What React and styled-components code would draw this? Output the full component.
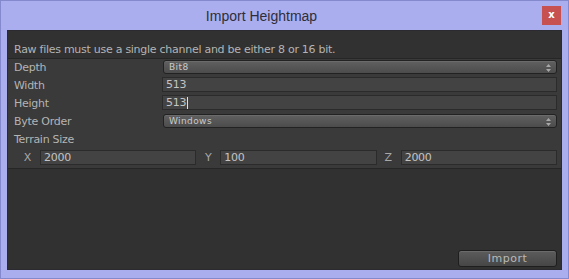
import React from 'react'
import styled, { createGlobalStyle } from 'styled-components'

const GlobalStyle = createGlobalStyle`
    html, body {
        margin: 0;
        padding: 0;
        background: #aaaeee;
    }
    * {
        box-sizing: border-box;
    }
`

const Window = styled.div`
    width: 569px;
    height: 279px;
    background: #aaaeee;
    border: 1px solid #8488cc;
    display: flex;
    flex-direction: column;
`

const TitleBar = styled.div`
    height: 29px;
    display: flex;
    align-items: flex-start;
`

const Title = styled.div`
    flex: 1;
    text-align: center;
    padding-right: 20px;
    padding-top: 6px;
    font-family: "Liberation Sans", Arial, sans-serif;
    font-size: 14px;
    line-height: 18px;
    color: #2e2e3a;
`

const CloseButton = styled.div`
    width: 19px;
    height: 19px;
    margin-top: 5px;
    margin-right: 7px;
    background: #c75050;
    color: #fff;
    font-family: "DejaVu Sans", sans-serif;
    font-weight: bold;
    font-size: 10px;
    line-height: 18px;
    text-align: center;
`

const Content = styled.div`
    flex: 1;
    margin: 0 6px 8px 6px;
    background: #313131;
    border: 1px solid #2a2a30;
    display: flex;
    flex-direction: column;
    font-family: "DejaVu Sans", sans-serif;
    font-size: 11px;
    letter-spacing: -0.27px;
    color: #b4b4b4;
`

const Message = styled.div`
    height: 27px;
    padding: 12px 0 0 6px;
    line-height: 14px;
`

const Panel = styled.div`
    background: #3a3a3a;
    border-top: 1px solid #262626;
    border-bottom: 1px solid #262626;
    padding: 0 4px 1px 6px;
`

const Row = styled.div`
    height: 18px;
    display: grid;
    grid-template-columns: 148px 1fr;
    align-items: start;
`

const Label = styled.div`
    padding-top: 1px;
    line-height: 16px;
`

const Popup = styled.div`
    position: relative;
    margin-top: 1px;
    margin-left: 1px;
    height: 14px;
    border: 1px solid #222;
    border-radius: 3px;
    background: linear-gradient(#606060, #4c4c4c);
    box-shadow: inset 0 1px 0 rgba(255, 255, 255, 0.08);
    padding-left: 5px;
    font-size: 9px;
    letter-spacing: 0.4px;
    line-height: 12px;
    color: #cacaca;
`

const Arrows = styled.svg`
    position: absolute;
    right: 5px;
    top: 3px;
`

const Field = styled.div`
    height: 15px;
    background: #434343;
    border: 1px solid #2b2b2b;
    padding-left: 3px;
    line-height: 13px;
    color: #c4c4c4;
    display: flex;
    align-items: center;
`

const Caret = styled.span`
    width: 1px;
    height: 12px;
    background: #e0e0e0;
    margin-left: 1px;
`

const VectorRow = styled.div`
    height: 18px;
    display: flex;
    gap: 2px;
    padding-left: 4px;
`

const Axis = styled.div`
    flex: 1;
    display: flex;
`

const AxisLabel = styled.div`
    width: 22px;
    padding: 1px 9px 0 0;
    text-align: right;
    line-height: 16px;
    color: #a8a8a8;
`

const AxisField = styled(Field)`
    flex: 1;
    margin-top: 1px;
`

const Footer = styled.div`
    flex: 1;
    display: flex;
    justify-content: flex-end;
    align-items: flex-end;
    padding: 0 4px 2px 0;
`

const Button = styled.div`
    width: 99px;
    height: 17px;
    border: 1px solid #1e1e1e;
    border-radius: 3px;
    background: linear-gradient(#5c5c5c, #464646);
    box-shadow: inset 0 1px 0 rgba(255, 255, 255, 0.1);
    text-align: center;
    letter-spacing: 0.5px;
    line-height: 15px;
    color: #b8b8b8;
`

const PopupArrows = () => (
    <Arrows width="5" height="8" viewBox="0 0 5 8">
        <path d="M2.5 0 L5 3 L0 3 Z M2.5 8 L5 5 L0 5 Z" fill="#a8a8a8" />
    </Arrows>
)

const App = () => {
    return (
        <>
            <GlobalStyle />
            <Window>
                <TitleBar>
                    <Title>Import Heightmap</Title>
                    <CloseButton>x</CloseButton>
                </TitleBar>
                <Content>
                    <Message>Raw files must use a single channel and be either 8 or 16 bit.</Message>
                    <Panel>
                        <Row>
                            <Label>Depth</Label>
                            <Popup>Bit8<PopupArrows /></Popup>
                        </Row>
                        <Row>
                            <Label>Width</Label>
                            <Field>513</Field>
                        </Row>
                        <Row>
                            <Label>Height</Label>
                            <Field>513<Caret /></Field>
                        </Row>
                        <Row>
                            <Label>Byte Order</Label>
                            <Popup>Windows<PopupArrows /></Popup>
                        </Row>
                        <Row>
                            <Label>Terrain Size</Label>
                        </Row>
                        <VectorRow>
                            <Axis>
                                <AxisLabel>X</AxisLabel>
                                <AxisField>2000</AxisField>
                            </Axis>
                            <Axis>
                                <AxisLabel>Y</AxisLabel>
                                <AxisField>100</AxisField>
                            </Axis>
                            <Axis>
                                <AxisLabel>Z</AxisLabel>
                                <AxisField>2000</AxisField>
                            </Axis>
                        </VectorRow>
                    </Panel>
                    <Footer>
                        <Button>Import</Button>
                    </Footer>
                </Content>
            </Window>
        </>
    )
}

export default App
